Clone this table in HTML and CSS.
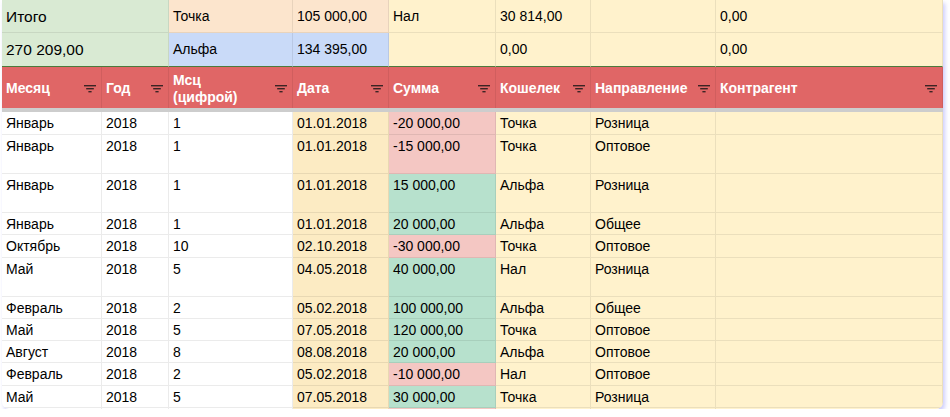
FILE: index.html
```html
<!DOCTYPE html>
<html lang="ru">
<head>
<meta charset="utf-8">
<title>Таблица</title>
<link rel="stylesheet" href="styles.css">
</head>
<body>
<div class="page">
  <div class="sheet">
    <div class="row sum sum-a">
      <div class="c green span2 big">Итого</div>
      <div class="c peach">Точка</div>
      <div class="c peach">105 000,00</div>
      <div class="c yellow">Нал</div>
      <div class="c yellow">30 814,00</div>
      <div class="c yellow"></div>
      <div class="c yellow">0,00</div>
    </div>
    <div class="row sum sum-b">
      <div class="c green span2 big">270 209,00</div>
      <div class="c blue">Альфа</div>
      <div class="c blue">134 395,00</div>
      <div class="c yellow"></div>
      <div class="c yellow">0,00</div>
      <div class="c yellow"></div>
      <div class="c yellow">0,00</div>
    </div>
    <div class="row head">
      <div class="h"><span>Месяц</span><svg class="flt" viewBox="0 0 12 8"><rect x="0" y="0" width="12" height="1.4"/><rect x="2.2" y="3" width="7.6" height="1.4"/><rect x="4.4" y="6" width="3.2" height="1.4"/></svg></div>
      <div class="h"><span>Год</span><svg class="flt" viewBox="0 0 12 8"><rect x="0" y="0" width="12" height="1.4"/><rect x="2.2" y="3" width="7.6" height="1.4"/><rect x="4.4" y="6" width="3.2" height="1.4"/></svg></div>
      <div class="h"><span>Мсц<br>(цифрой)</span><svg class="flt" viewBox="0 0 12 8"><rect x="0" y="0" width="12" height="1.4"/><rect x="2.2" y="3" width="7.6" height="1.4"/><rect x="4.4" y="6" width="3.2" height="1.4"/></svg></div>
      <div class="h"><span>Дата</span><svg class="flt" viewBox="0 0 12 8"><rect x="0" y="0" width="12" height="1.4"/><rect x="2.2" y="3" width="7.6" height="1.4"/><rect x="4.4" y="6" width="3.2" height="1.4"/></svg></div>
      <div class="h"><span>Сумма</span><svg class="flt" viewBox="0 0 12 8"><rect x="0" y="0" width="12" height="1.4"/><rect x="2.2" y="3" width="7.6" height="1.4"/><rect x="4.4" y="6" width="3.2" height="1.4"/></svg></div>
      <div class="h"><span>Кошелек</span><svg class="flt" viewBox="0 0 12 8"><rect x="0" y="0" width="12" height="1.4"/><rect x="2.2" y="3" width="7.6" height="1.4"/><rect x="4.4" y="6" width="3.2" height="1.4"/></svg></div>
      <div class="h"><span>Направление</span><svg class="flt" viewBox="0 0 12 8"><rect x="0" y="0" width="12" height="1.4"/><rect x="2.2" y="3" width="7.6" height="1.4"/><rect x="4.4" y="6" width="3.2" height="1.4"/></svg></div>
      <div class="h"><span>Контрагент</span><svg class="flt" viewBox="0 0 12 8"><rect x="0" y="0" width="12" height="1.4"/><rect x="2.2" y="3" width="7.6" height="1.4"/><rect x="4.4" y="6" width="3.2" height="1.4"/></svg></div>
    </div>
    <div class="freeze"></div>

    <div class="row d first">
      <div class="c">Январь</div><div class="c">2018</div><div class="c">1</div><div class="c date">01.01.2018</div><div class="c neg">-20 000,00</div><div class="c yellow">Точка</div><div class="c yellow">Розница</div><div class="c yellow"></div>
    </div>
    <div class="row d tall">
      <div class="c">Январь</div><div class="c">2018</div><div class="c">1</div><div class="c date">01.01.2018</div><div class="c neg">-15 000,00</div><div class="c yellow">Точка</div><div class="c yellow">Оптовое</div><div class="c yellow"></div>
    </div>
    <div class="row d tall">
      <div class="c">Январь</div><div class="c">2018</div><div class="c">1</div><div class="c date">01.01.2018</div><div class="c pos">15 000,00</div><div class="c yellow">Альфа</div><div class="c yellow">Розница</div><div class="c yellow"></div>
    </div>
    <div class="row d">
      <div class="c">Январь</div><div class="c">2018</div><div class="c">1</div><div class="c date">01.01.2018</div><div class="c pos">20 000,00</div><div class="c yellow">Альфа</div><div class="c yellow">Общее</div><div class="c yellow"></div>
    </div>
    <div class="row d">
      <div class="c">Октябрь</div><div class="c">2018</div><div class="c">10</div><div class="c date">02.10.2018</div><div class="c neg">-30 000,00</div><div class="c yellow">Точка</div><div class="c yellow">Оптовое</div><div class="c yellow"></div>
    </div>
    <div class="row d tall">
      <div class="c">Май</div><div class="c">2018</div><div class="c">5</div><div class="c date">04.05.2018</div><div class="c pos">40 000,00</div><div class="c yellow">Нал</div><div class="c yellow">Розница</div><div class="c yellow"></div>
    </div>
    <div class="row d">
      <div class="c">Февраль</div><div class="c">2018</div><div class="c">2</div><div class="c date">05.02.2018</div><div class="c pos">100 000,00</div><div class="c yellow">Альфа</div><div class="c yellow">Общее</div><div class="c yellow"></div>
    </div>
    <div class="row d">
      <div class="c">Май</div><div class="c">2018</div><div class="c">5</div><div class="c date">07.05.2018</div><div class="c pos">120 000,00</div><div class="c yellow">Точка</div><div class="c yellow">Оптовое</div><div class="c yellow"></div>
    </div>
    <div class="row d">
      <div class="c">Август</div><div class="c">2018</div><div class="c">8</div><div class="c date">08.08.2018</div><div class="c pos">20 000,00</div><div class="c yellow">Альфа</div><div class="c yellow">Оптовое</div><div class="c yellow"></div>
    </div>
    <div class="row d">
      <div class="c">Февраль</div><div class="c">2018</div><div class="c">2</div><div class="c date">05.02.2018</div><div class="c neg">-10 000,00</div><div class="c yellow">Нал</div><div class="c yellow">Оптовое</div><div class="c yellow"></div>
    </div>
    <div class="row d">
      <div class="c">Май</div><div class="c">2018</div><div class="c">5</div><div class="c date">07.05.2018</div><div class="c pos">30 000,00</div><div class="c yellow">Точка</div><div class="c yellow">Розница</div><div class="c yellow"></div>
    </div>
    <div class="row d">
      <div class="c"></div><div class="c"></div><div class="c"></div><div class="c date"></div><div class="c neg"></div><div class="c yellow"></div><div class="c yellow"></div><div class="c yellow"></div>
    </div>
  </div>
</div>
</body>
</html>
```

FILE: styles.css
```css
* { box-sizing: border-box; }

html, body {
  margin: 0;
  padding: 0;
  background: #ffffff;
}

.page {
  padding-left: 2px;
}

.sheet {
  width: 941px;
  height: 409px;
  overflow: hidden;
  border-radius: 0 0 7px 7px;
  box-shadow: 2px 3px 4px rgba(110, 110, 245, 0.35);
  font-family: "Liberation Sans", Arial, sans-serif;
  font-size: 14px;
  color: #000;
  background: #fff;
}

.row {
  display: grid;
  grid-template-columns: 100px 67px 124px 96px 107px 95px 125px 227px;
}

.c {
  border-right: 1px solid rgba(0, 0, 0, 0.08);
  border-bottom: 1px solid rgba(0, 0, 0, 0.08);
  padding: 3px 4px 0 4px;
  line-height: 17px;
  white-space: nowrap;
  overflow: hidden;
}

.span2 { grid-column: span 2; }

.sum .c {
  display: flex;
  align-items: center;
  padding-top: 0;
}
.sum-a { height: 33px; }
.sum-b { height: 34px; }
.sum-b .c { border-bottom: 1px solid #4c7a3c; }
.big { font-size: 15.5px; }

.green  { background: #d9ead3; }
.peach  { background: #fce5cd; }
.blue   { background: #c9daf8; }
.yellow { background: #fff2cc; }
.date   { background: #fcebc3; }
.neg    { background: #f4c7c3; }
.pos    { background: #b7e1cd; }

.head {
  height: 41px;
  background: #e06666;
}
.h {
  display: flex;
  align-items: center;
  justify-content: space-between;
  padding: 2px 5px 0 4px;
  border-right: 1px solid rgba(0, 0, 0, 0.07);
  color: #fff;
  font-weight: bold;
  font-size: 14px;
  line-height: 16.5px;
}
.flt {
  width: 12px;
  height: 8px;
  fill: #3b2424;
  flex: none;
}

.freeze {
  height: 4px;
  background: #cdcdcd;
}

.d { height: 22.3px; }
.d.first { height: 23px; }
.d.tall { height: 39px; }
```
